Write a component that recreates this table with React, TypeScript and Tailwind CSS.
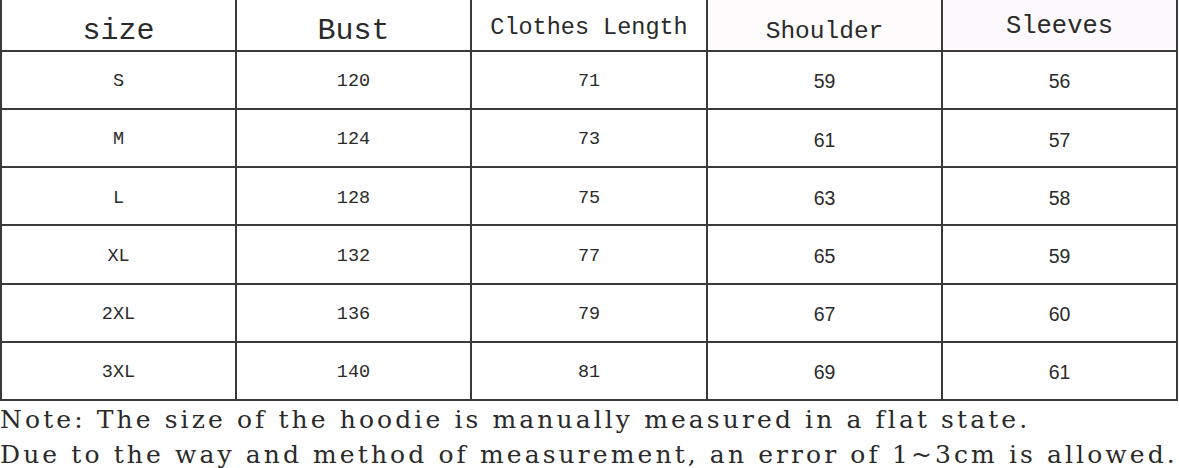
import React from "react";

const rows = [
  ["S", "120", "71", "59", "56"],
  ["M", "124", "73", "61", "57"],
  ["L", "128", "75", "63", "58"],
  ["XL", "132", "77", "65", "59"],
  ["2XL", "136", "79", "67", "60"],
  ["3XL", "140", "81", "69", "61"],
];

const cell = "border-r-2 border-b-2 border-[#3a3a3a] flex items-center justify-center";
const mono = "font-['Liberation_Mono',monospace]";
const sans = "font-['Liberation_Sans',Arial,sans-serif]";

export default function App() {
  return (
    <div className="w-[1179px] h-[468px] bg-white overflow-hidden text-[#2a2a2a]">
      <div className="grid grid-cols-[235px_235px_236px_235px_235px] grid-rows-[52px_repeat(6,58.17px)] border-l-2 border-[#3a3a3a] w-[1178px]">
        <div className={`${cell} ${mono} pt-[12px] text-[30px]`}>size</div>
        <div className={`${cell} ${mono} pt-[12px] text-[30px]`}>Bust</div>
        <div className={`${cell} ${mono} pt-[6px] text-[23.5px]`}>Clothes Length</div>
        <div className={`${cell} ${mono} pt-[14px] text-[24.5px] bg-[#fdfbfc]`}>Shoulder</div>
        <div className={`${cell} ${mono} pt-[4px] text-[25.5px] bg-[#fdf9fc]`}>Sleeves</div>
        {rows.map((r, i) => (
          <React.Fragment key={i}>
            <div className={`${cell} ${mono} pt-[4px] text-[18.5px]`}>{r[0]}</div>
            <div className={`${cell} ${mono} pt-[4px] text-[18.5px]`}>{r[1]}</div>
            <div className={`${cell} ${mono} pt-[4px] text-[18.5px]`}>{r[2]}</div>
            <div className={`${cell} ${sans} pt-[4px] text-[19.5px]`}>{r[3]}</div>
            <div className={`${cell} ${sans} pt-[4px] text-[19.5px]`}>{r[4]}</div>
          </React.Fragment>
        ))}
      </div>
      <div className="pt-[1px] text-[25px] leading-[35px] tracking-[3.1px] whitespace-nowrap font-['DejaVu_Serif',serif]">
        <div>Note: The size of the hoodie is manually measured in a flat state.</div>
        <div>Due to the way and method of measurement, an error of 1~3cm is allowed.</div>
      </div>
    </div>
  );
}
